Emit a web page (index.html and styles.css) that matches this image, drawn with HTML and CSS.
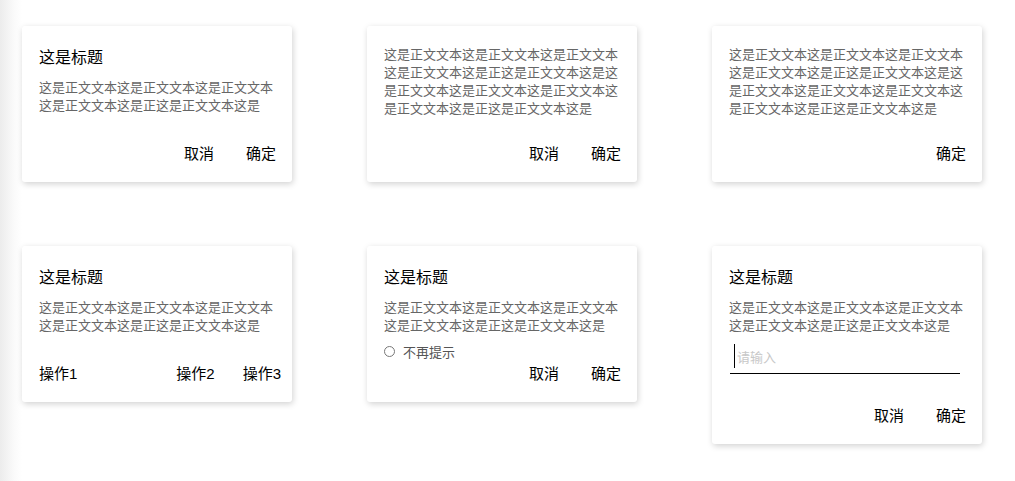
FILE: index.html
```html
<!DOCTYPE html>
<html lang="zh-CN">
<head>
    <meta charset="UTF-8">
    <meta name="viewport" content="width=device-width, initial-scale=1.0">
    <title>对话框</title>
    <link rel="stylesheet" href="styles.css">
</head>
<body>
    <div class="page">
        <div class="dialog-grid">
            <!-- 标题 + 正文 + 两个按钮 -->
            <div class="dialog">
                <div class="dialog-title">这是标题</div>
                <div class="dialog-text">这是正文文本这是正文文本这是正文文本这是正文文本这是正这是正文文本这是</div>
                <div class="dialog-actions">
                    <button type="button" class="dialog-btn">取消</button>
                    <button type="button" class="dialog-btn">确定</button>
                </div>
            </div>

            <!-- 无标题 -->
            <div class="dialog">
                <div class="dialog-text">这是正文文本这是正文文本这是正文文本这是正文文本这是正这是正文文本这是这是正文文本这是正文文本这是正文文本这是正文文本这是正这是正文文本这是</div>
                <div class="dialog-actions">
                    <button type="button" class="dialog-btn">取消</button>
                    <button type="button" class="dialog-btn">确定</button>
                </div>
            </div>

            <!-- 无标题，单按钮 -->
            <div class="dialog">
                <div class="dialog-text">这是正文文本这是正文文本这是正文文本这是正文文本这是正这是正文文本这是这是正文文本这是正文文本这是正文文本这是正文文本这是正这是正文文本这是</div>
                <div class="dialog-actions">
                    <button type="button" class="dialog-btn">确定</button>
                </div>
            </div>

            <!-- 三个操作 -->
            <div class="dialog">
                <div class="dialog-title">这是标题</div>
                <div class="dialog-text">这是正文文本这是正文文本这是正文文本这是正文文本这是正这是正文文本这是</div>
                <div class="dialog-actions dialog-actions-three">
                    <button type="button" class="dialog-btn dialog-btn-left">操作1</button>
                    <button type="button" class="dialog-btn">操作2</button>
                    <button type="button" class="dialog-btn">操作3</button>
                </div>
            </div>

            <!-- 带“不再提示” -->
            <div class="dialog">
                <div class="dialog-title">这是标题</div>
                <div class="dialog-text">这是正文文本这是正文文本这是正文文本这是正文文本这是正这是正文文本这是</div>
                <label class="dialog-check">
                    <span class="check-circle"></span>
                    不再提示
                </label>
                <div class="dialog-actions">
                    <button type="button" class="dialog-btn">取消</button>
                    <button type="button" class="dialog-btn">确定</button>
                </div>
            </div>

            <!-- 带输入框 -->
            <div class="dialog">
                <div class="dialog-title">这是标题</div>
                <div class="dialog-text">这是正文文本这是正文文本这是正文文本这是正文文本这是正这是正文文本这是</div>
                <div class="dialog-field">
                    <input type="text" class="dialog-input" placeholder="请输入">
                    <span class="field-caret"></span>
                </div>
                <div class="dialog-actions dialog-actions-field">
                    <button type="button" class="dialog-btn">取消</button>
                    <button type="button" class="dialog-btn">确定</button>
                </div>
            </div>
        </div>
    </div>
</body>
</html>
```

FILE: styles.css
```css
body, html {
    margin: 0;
    padding: 0;
    height: 100%;
}
.page {
    min-height: 100vh;
    box-sizing: border-box;
    padding: 26px 0 0 22px;
    background: linear-gradient(to right, #ececec 0, #fafafa 14px, #ffffff 22px);
    font-family: "Liberation Sans", "Noto Sans CJK SC", sans-serif;
}
.dialog-grid {
    display: grid;
    grid-template-columns: repeat(3, 270px);
    column-gap: 75px;
    row-gap: 64px;
    align-items: start;
}

/* 卡片 */
.dialog {
    background-color: white;
    border-radius: 3px;
    box-shadow: 1px 2px 6px rgba(0, 0, 0, 0.18);
    min-height: 156px;
    box-sizing: border-box;
    padding: 20px 16px 18px 17px;
    display: flex;
    flex-direction: column;
}
.dialog-title {
    font-size: 16px;
    line-height: 24px;
    color: #000;
    margin-bottom: 9px;
}
.dialog-text {
    font-size: 13px;
    line-height: 18px;
    color: #666;
    width: 236px;
}

/* 按钮 */
.dialog-actions {
    margin-top: auto;
    display: flex;
    justify-content: flex-end;
    gap: 32px;
}
.dialog-actions-three {
    gap: 28px;
    margin-right: -5px;
}
.dialog-actions-field {
    margin-top: 32px;
}
.dialog-btn {
    background: none;
    border: none;
    padding: 0;
    font-family: inherit;
    font-size: 15px;
    line-height: 20px;
    color: #000;
    cursor: pointer;
}
.dialog-btn-left {
    margin-right: auto;
}

/* 不再提示 */
.dialog-check {
    display: flex;
    align-items: center;
    gap: 8px;
    margin-top: 8px;
    height: 16px;
    font-size: 13px;
    color: #555;
}
.check-circle {
    width: 9px;
    height: 9px;
    border: 1px solid #777;
    border-radius: 50%;
}

/* 输入框 */
.dialog-field {
    position: relative;
    margin: 6px 6px 0 1px;
}
.dialog-input {
    display: block;
    width: 100%;
    box-sizing: border-box;
    height: 33px;
    border: none;
    border-bottom: 1px solid #000;
    padding: 0 0 0 7px;
    font-family: inherit;
    font-size: 13px;
    outline: none;
}
.dialog-input::placeholder {
    color: #c8c8c8;
}
.field-caret {
    position: absolute;
    left: 4px;
    top: 3px;
    width: 1px;
    height: 24px;
    background-color: #000;
}
```
